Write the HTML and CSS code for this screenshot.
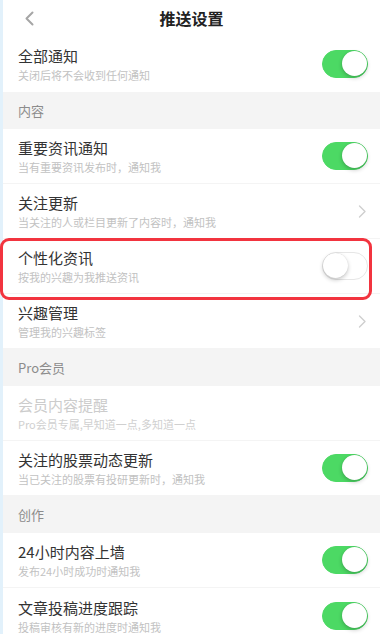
FILE: index.html
```html
<!DOCTYPE html>
<html lang="zh-CN">
<head>
<meta charset="utf-8">
<title>推送设置</title>
<link rel="stylesheet" href="styles.css">
</head>
<body>
<div class="page">
  <header class="topbar">
    <span class="back">
      <svg width="11" height="15" viewBox="0 0 11 15"><path d="M8.5 1.5 L2.5 7.5 L8.5 13.5" fill="none" stroke="#a6a6a6" stroke-width="2" stroke-linecap="round" stroke-linejoin="round"/></svg>
    </span>
    <h1 class="title">推送设置</h1>
    <span></span>
  </header>

  <div class="item first">
    <div class="text"><div class="name">全部通知</div><div class="desc">关闭后将不会收到任何通知</div></div>
    <span class="switch on"></span>
  </div>

  <div class="section">内容</div>
  <div class="item">
    <div class="text"><div class="name">重要资讯通知</div><div class="desc">当有重要资讯发布时，通知我</div></div>
    <span class="switch on"></span>
  </div>
  <div class="item">
    <div class="text"><div class="name">关注更新</div><div class="desc">当关注的人或栏目更新了内容时，通知我</div></div>
    <svg class="chev" width="9" height="13" viewBox="0 0 9 13"><path d="M1.5 1 L7 6.5 L1.5 12" fill="none" stroke="#cfcfcf" stroke-width="1.4" stroke-linecap="round" stroke-linejoin="round"/></svg>
  </div>
  <div class="item highlighted">
    <div class="text"><div class="name">个性化资讯</div><div class="desc">按我的兴趣为我推送资讯</div></div>
    <span class="switch"></span>
    <span class="mark"></span>
  </div>
  <div class="item">
    <div class="text"><div class="name">兴趣管理</div><div class="desc">管理我的兴趣标签</div></div>
    <svg class="chev" width="9" height="13" viewBox="0 0 9 13"><path d="M1.5 1 L7 6.5 L1.5 12" fill="none" stroke="#cfcfcf" stroke-width="1.4" stroke-linecap="round" stroke-linejoin="round"/></svg>
  </div>

  <div class="section">Pro会员</div>
  <div class="item disabled">
    <div class="text"><div class="name">会员内容提醒</div><div class="desc">Pro会员专属,早知道一点,多知道一点</div></div>
  </div>
  <div class="item">
    <div class="text"><div class="name">关注的股票动态更新</div><div class="desc">当已关注的股票有投研更新时，通知我</div></div>
    <span class="switch on"></span>
  </div>

  <div class="section">创作</div>
  <div class="item">
    <div class="text"><div class="name">24小时内容上墙</div><div class="desc">发布24小时成功时通知我</div></div>
    <span class="switch on"></span>
  </div>
  <div class="item">
    <div class="text"><div class="name">文章投稿进度跟踪</div><div class="desc">投稿审核有新的进度时通知我</div></div>
    <span class="switch on"></span>
  </div>
</div>
</body>
</html>
```
FILE: styles.css
```css
html, body {
  margin: 0;
  padding: 0;
  overflow: hidden;
  background: #ffffff;
}
body {
  font-family: "Noto Sans CJK SC", "Noto Sans", sans-serif;
  color: #333333;
}
.page {
  width: 377px;
  border-left: 3px solid #e2f1fb;
  min-height: 700px;
  background: #ffffff;
}
.topbar {
  height: 36px;
  display: grid;
  grid-template-columns: 1fr auto 1fr;
  align-items: center;
}
.back {
  padding-left: 21px;
  display: flex;
  align-items: center;
}
.title {
  margin: 0;
  font-size: 16px;
  font-weight: 700;
  color: #222222;
  line-height: 20px;
}
.item {
  position: relative;
  height: 55px;
  box-sizing: border-box;
  padding: 0 12px 0 15px;
  display: flex;
  align-items: center;
  justify-content: space-between;
  border-bottom: 1px solid #f4f4f4;
}
.item.first {
  height: 56px;
  border-bottom: none;
}
.item:last-child { border-bottom: none; }
.text { display: flex; flex-direction: column; }
.name {
  font-size: 15px;
  line-height: 20px;
  color: #333333;
}
.desc {
  margin-top: 2px;
  font-size: 11px;
  line-height: 14px;
  color: #c2c2c2;
}
.disabled .name { color: #cccccc; }
.disabled .desc { color: #d0d0d0; }
.section {
  height: 37px;
  background: #f4f4f4;
  padding-left: 15px;
  display: flex;
  align-items: center;
  font-size: 13px;
  color: #8c8c8c;
}
.switch {
  position: relative;
  width: 46px;
  height: 28px;
  border-radius: 14px;
  box-sizing: border-box;
  background: #ffffff;
  border: 1.5px solid #e6e6e6;
  flex: none;
}
.switch::after {
  content: "";
  position: absolute;
  top: 0;
  left: 0;
  width: 25px;
  height: 25px;
  border-radius: 50%;
  background: #ffffff;
  box-shadow: 0 2px 4px rgba(0,0,0,0.22), 0 0 1px rgba(0,0,0,0.15);
}
.switch.on {
  background: #4cd964;
  border-color: #4cd964;
}
.switch.on::after {
  left: auto;
  right: 0;
}
.chev { margin-right: 1px; }
.mark {
  position: absolute;
  left: -3px;
  top: -1px;
  width: 372px;
  height: 62px;
  box-sizing: border-box;
  border: 3px solid #f2343f;
  border-radius: 9px;
  pointer-events: none;
}
```
